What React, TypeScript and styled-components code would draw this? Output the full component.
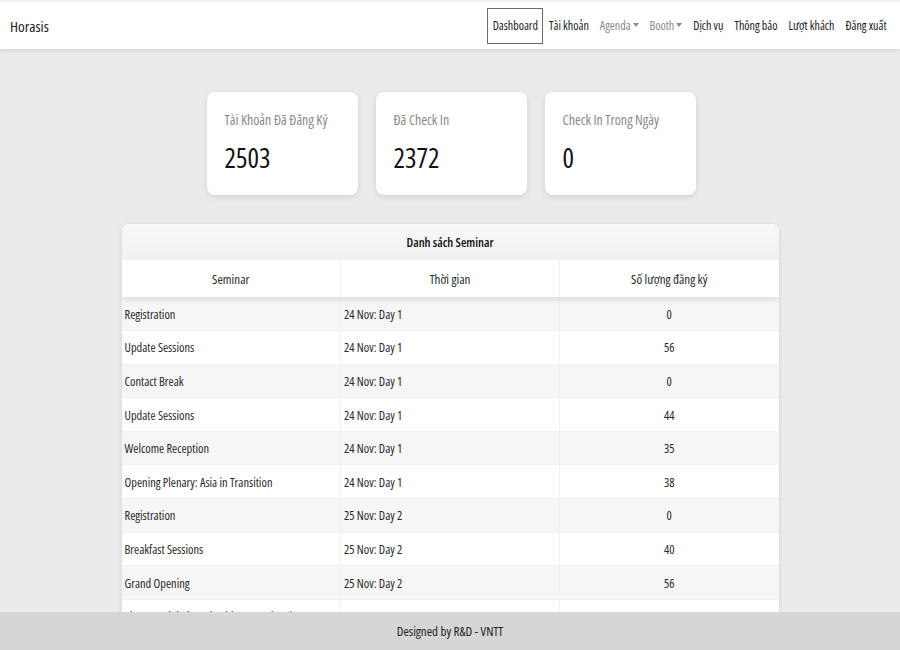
import React from "react";
import styled, { createGlobalStyle } from "styled-components";

const Global = createGlobalStyle`
  html, body { margin: 0; padding: 0; }
  body {
    background: #ebebeb;
    font-family: "Open Sans", "Roboto Condensed", sans-serif;
    font-stretch: 75%;
    font-weight: 370;
    color: #212529;
  }
  * { box-sizing: border-box; }
`;

const Page = styled.div`
  min-height: 650px;
  padding-bottom: 60px;
`;

const NavBar = styled.header`
  height: 49px;
  background: #fff;
  border-top: 2px solid #f2f2f2;
  box-shadow: 0 2px 4px rgba(0, 0, 0, 0.08);
  display: flex;
  align-items: center;
  justify-content: space-between;
  padding: 0 8px 0 10px;
`;

const Brand = styled.div`
  font-size: 15.2px;
  color: #222;
`;

const NavList = styled.nav`
  display: flex;
  align-items: center;
`;

const NavLink = styled.a<{ $active?: boolean; $muted?: boolean }>`
  font-size: 12px;
  padding: 9px 4.5px;
  color: ${(p) => (p.$muted ? "#8a8a8a" : "#1a1a1a")};
  border: 1px solid ${(p) => (p.$active ? "#6c6c6c" : "transparent")};
  display: flex;
  align-items: center;
  line-height: 16px;
`;

const Caret = styled.span`
  display: inline-block;
  width: 0;
  height: 0;
  border-left: 3px solid transparent;
  border-right: 3px solid transparent;
  border-top: 4px solid #8a8a8a;
  margin-left: 2px;
  margin-top: -2px;
`;

const StatsRow = styled.section`
  display: flex;
  justify-content: center;
  gap: 18px;
  margin-top: 43px;
  padding-left: 2px;
`;

const StatCard = styled.div`
  width: 151px;
  height: 103px;
  background: #fff;
  border-radius: 8px;
  box-shadow: 0 2px 6px rgba(0, 0, 0, 0.1);
  padding: 18px 18px;
`;

const StatLabel = styled.div`
  font-size: 13.9px;
  color: #8a8a8a;
  line-height: 20px;
  white-space: nowrap;
`;

const StatValue = styled.div`
  font-size: 27px;
  color: #111;
  margin-top: 10px;
  line-height: 36px;
`;

const TableCard = styled.section`
  width: 657px;
  margin: 29px auto 0;
  background: #fff;
  border-radius: 7px;
  box-shadow: 0 1px 5px rgba(0, 0, 0, 0.1);
  overflow: hidden;
`;

const TableTitle = styled.div`
  height: 36px;
  background: linear-gradient(#f8f8f8, #f1f1f1);
  font-size: 12.5px;
  font-weight: 600;
  display: flex;
  align-items: center;
  justify-content: center;
  color: #111;
`;

const Table = styled.table`
  width: 100%;
  border-collapse: collapse;
  table-layout: fixed;
  font-size: 12.4px;
`;

const HeadRow = styled.tr`
  box-shadow: 0 3px 6px rgba(0, 0, 0, 0.1);
  position: relative;
`;

const Th = styled.th`
  height: 37px;
  font-size: 13px;
  font-weight: 370;
  text-align: center;
  color: #2a2a2a;
  background: #fff;
  border-left: 1px solid #efefef;
  &:first-child { border-left: none; }
`;

const Row = styled.tr<{ $odd: boolean }>`
  background: ${(p) => (p.$odd ? "#f6f6f6" : "#fff")};
`;

const Td = styled.td<{ $center?: boolean }>`
  height: 33.6px;
  padding: 1px 3px 0;
  color: #2a2a2a;
  white-space: nowrap;
  overflow: hidden;
  text-align: ${(p) => (p.$center ? "center" : "left")};
  border-left: 1px solid #f0f0f0;
  border-bottom: 1px solid #f1f1f1;
  &:first-child { border-left: none; }
`;

const Footer = styled.footer`
  position: fixed;
  left: 0;
  right: 0;
  bottom: 0;
  height: 38px;
  background: #d6d6d6;
  display: flex;
  align-items: center;
  justify-content: center;
  font-size: 13px;
  color: #222;
`;

const rows: [string, string, number][] = [
  ["Registration", "24 Nov: Day 1", 0],
  ["Update Sessions", "24 Nov: Day 1", 56],
  ["Contact Break", "24 Nov: Day 1", 0],
  ["Update Sessions", "24 Nov: Day 1", 44],
  ["Welcome Reception", "24 Nov: Day 1", 35],
  ["Opening Plenary: Asia in Transition", "24 Nov: Day 1", 38],
  ["Registration", "25 Nov: Day 2", 0],
  ["Breakfast Sessions", "25 Nov: Day 2", 40],
  ["Grand Opening", "25 Nov: Day 2", 56],
  ["Plenary: Global Leadership Towards Asia", "25 Nov: Day 2", 52],
  ["Contact Break", "25 Nov: Day 2", 0],
  ["Update Sessions", "25 Nov: Day 2", 47],
];

export default function App() {
  return (
    <Page>
      <Global />
      <NavBar>
        <Brand>Horasis</Brand>
        <NavList>
          <NavLink $active>Dashboard</NavLink>
          <NavLink>Tài khoản</NavLink>
          <NavLink $muted>
            Agenda<Caret />
          </NavLink>
          <NavLink $muted>
            Booth<Caret />
          </NavLink>
          <NavLink>Dịch vụ</NavLink>
          <NavLink>Thông báo</NavLink>
          <NavLink>Lượt khách</NavLink>
          <NavLink>Đăng xuất</NavLink>
        </NavList>
      </NavBar>

      <StatsRow>
        <StatCard>
          <StatLabel>Tài Khoản Đã Đăng Ký</StatLabel>
          <StatValue>2503</StatValue>
        </StatCard>
        <StatCard>
          <StatLabel>Đã Check In</StatLabel>
          <StatValue>2372</StatValue>
        </StatCard>
        <StatCard>
          <StatLabel>Check In Trong Ngày</StatLabel>
          <StatValue>0</StatValue>
        </StatCard>
      </StatsRow>

      <TableCard>
        <TableTitle>Danh sách Seminar</TableTitle>
        <Table>
          <thead>
            <HeadRow>
              <Th>Seminar</Th>
              <Th>Thời gian</Th>
              <Th>Số lượng đăng ký</Th>
            </HeadRow>
          </thead>
          <tbody>
            {rows.map(([name, time, count], i) => (
              <Row key={i} $odd={i % 2 === 0}>
                <Td>{name}</Td>
                <Td>{time}</Td>
                <Td $center>{count}</Td>
              </Row>
            ))}
          </tbody>
        </Table>
      </TableCard>

      <Footer>Designed by R&amp;D - VNTT</Footer>
    </Page>
  );
}
